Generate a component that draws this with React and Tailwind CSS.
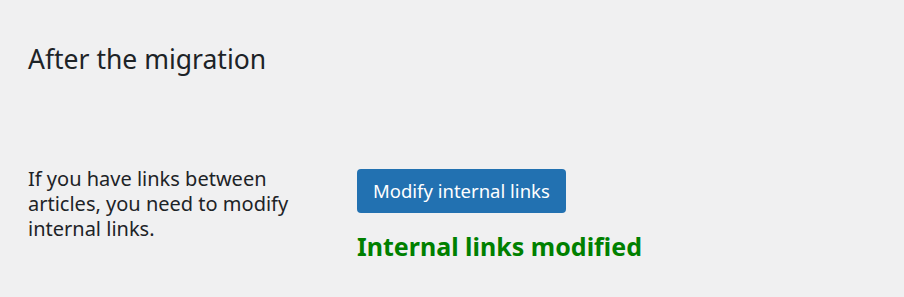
export default function App() {
  return (
    <div
      className="min-h-[297px] w-full bg-[#f0f0f1] text-[#1d2327]"
      style={{ fontFamily: '"Noto Sans", "Open Sans", sans-serif' }}
    >
      <div className="px-[28px] pt-[40px]">
        <h2 className="text-[26.5px] leading-[38px] font-normal">After the migration</h2>
        <div className="mt-[86px] flex items-start">
          <div className="w-[329px] pr-[29px] pt-[2px] text-[20px] leading-[25px]">
            If you have links between articles, you need to modify internal links.
          </div>
          <div className="mt-[5px] flex flex-col items-start">
            <button className="h-[44px] rounded-[4px] bg-[#2271b1] px-[16px] text-[18.5px] text-white">
              Modify internal links
            </button>
            <p className="mt-[16px] text-[25px] font-bold leading-[34px] text-[#008000]">
              Internal links modified
            </p>
          </div>
        </div>
      </div>
    </div>
  );
}
